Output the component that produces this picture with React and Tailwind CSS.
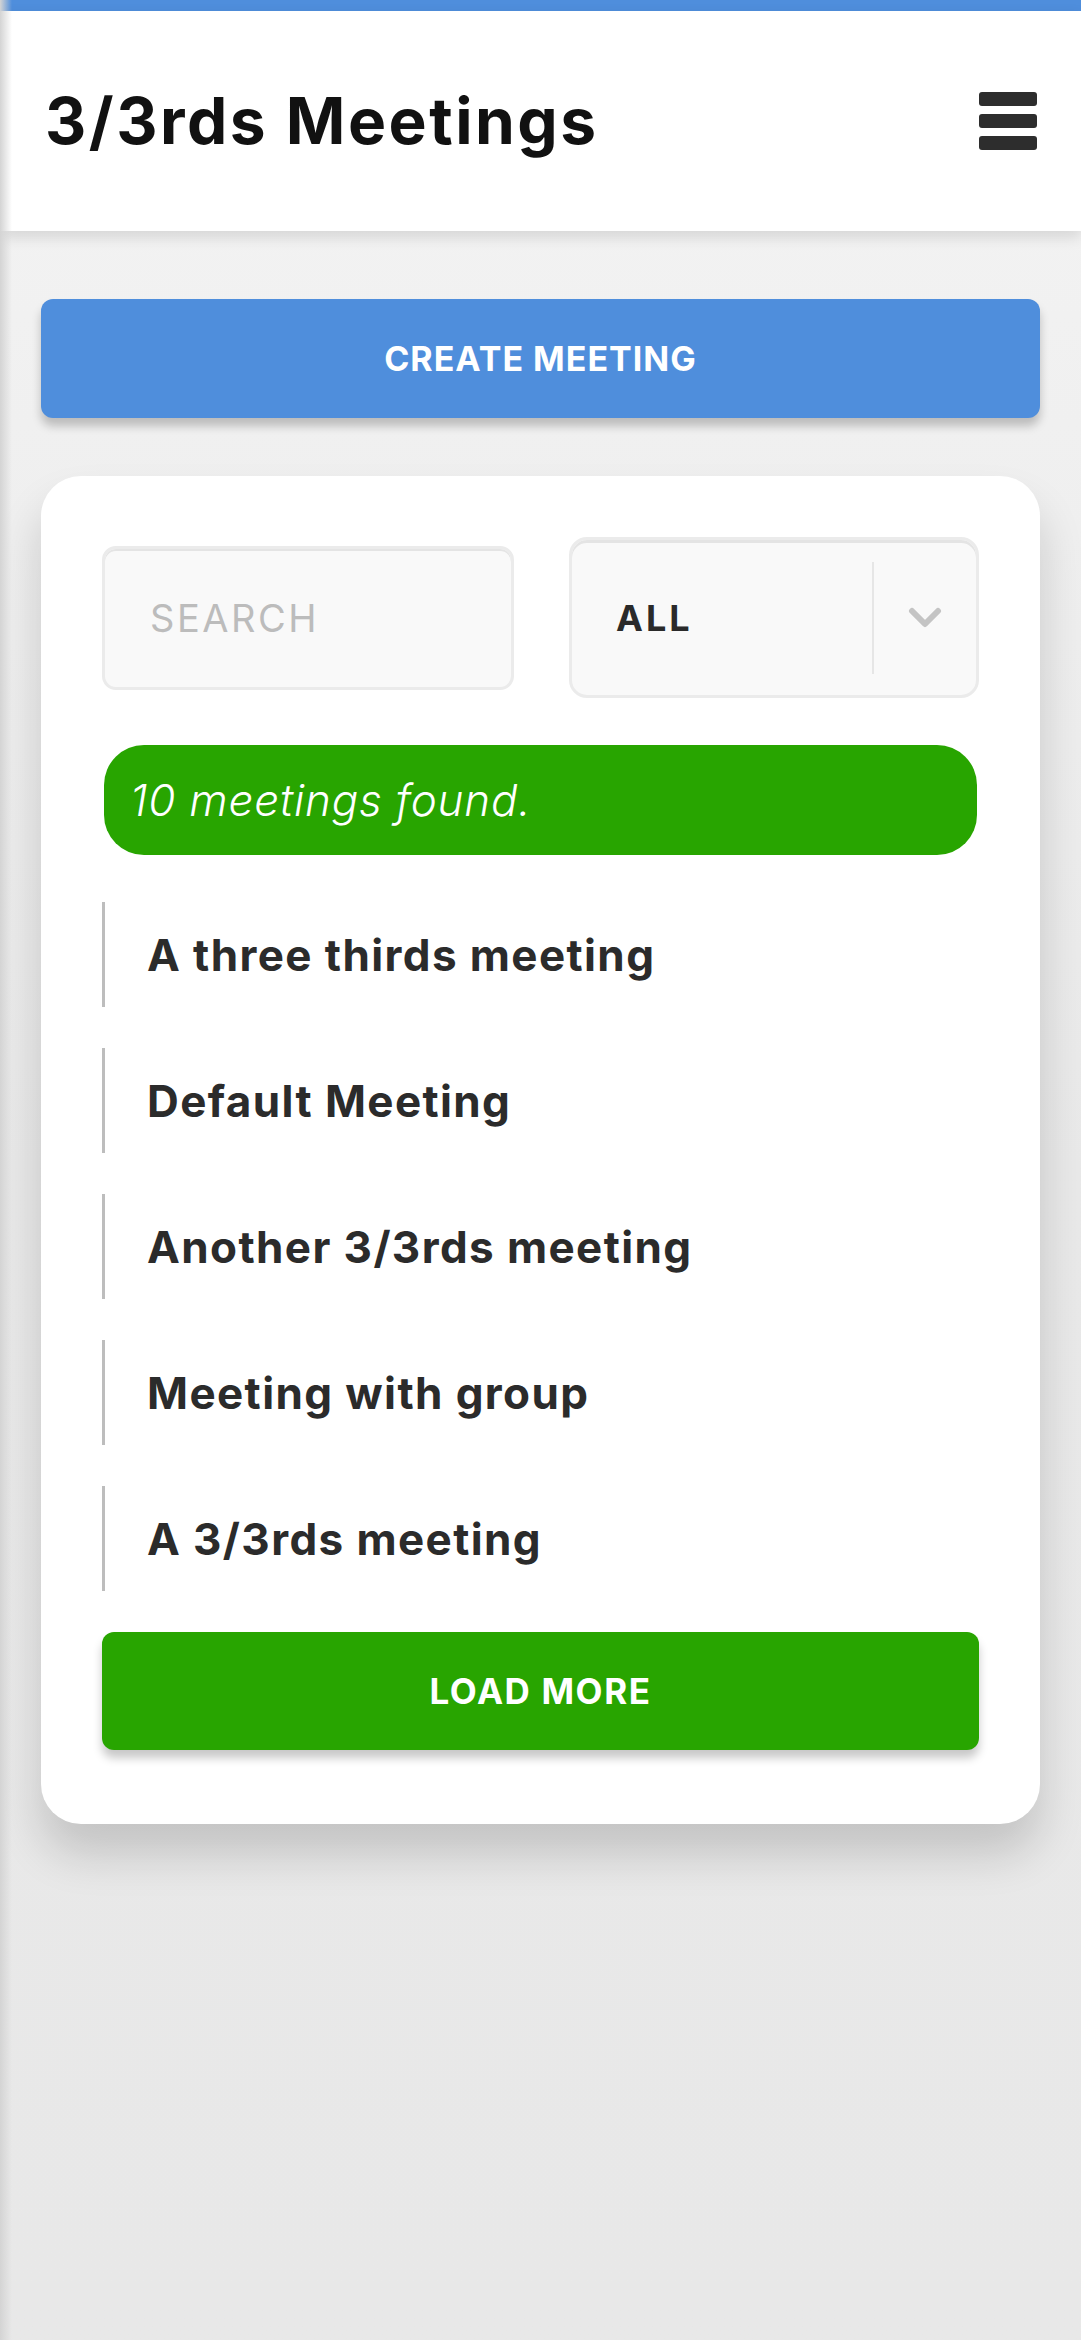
import { useState } from "react";

const meetings = [
  "A three thirds meeting",
  "Default Meeting",
  "Another 3/3rds meeting",
  "Meeting with group",
  "A 3/3rds meeting",
];

function Hamburger() {
  return (
    <button className="flex flex-col gap-[8px] w-[58px]">
      <span className="block h-[14px] rounded-[3px] bg-[#2d2d2d]" />
      <span className="block h-[14px] rounded-[3px] bg-[#2d2d2d]" />
      <span className="block h-[14px] rounded-[3px] bg-[#2d2d2d]" />
    </button>
  );
}

export default function App() {
  const [query, setQuery] = useState("");

  return (
    <div
      className="min-h-[2340px] w-full bg-gradient-to-b from-[#f4f4f4] via-[#e9e9e9] to-[#e8e8e8] relative overflow-hidden"
      style={{ fontFamily: "Inter, 'Open Sans', sans-serif" }}
    >
      {/* left drawer edge */}
      <div className="absolute left-0 top-0 bottom-0 w-[12px] bg-gradient-to-r from-[#d4d4d4] to-transparent pointer-events-none z-20" />

      {/* Top bar */}
      <div className="h-[11px] bg-[#4f8edc]" />

      {/* Header */}
      <header className="relative z-10 h-[220px] bg-white pl-[45px] pr-[44px] flex items-center justify-between shadow-[0_6px_14px_rgba(0,0,0,0.12)]">
        <h1 className="text-[64px] font-bold text-[#111] tracking-[2.5px]">3/3rds Meetings</h1>
        <Hamburger />
      </header>

      <main className="px-[41px] pt-[68px]">
        {/* Create */}
        <button className="w-full h-[119px] rounded-[12px] bg-[#4f8edc] text-white text-[34px] font-bold tracking-[1px] shadow-[0_8px_10px_rgba(0,0,0,0.22)]">
          CREATE MEETING
        </button>

        {/* Card */}
        <div className="mt-[58px] rounded-[40px] bg-white px-[61px] pt-[61px] pb-[74px] shadow-[0_30px_45px_rgba(0,0,0,0.16)]">
          {/* Filters */}
          <div className="flex items-center gap-[55px]">
            <input
              value={query}
              onChange={(e) => setQuery(e.target.value)}
              placeholder="SEARCH"
              className="w-[412px] h-[144px] rounded-[14px] bg-[#f9f9f9] border-[3px] border-[#ebebeb] pl-[45px] text-[38px] tracking-[2.5px] text-[#333] placeholder-[#bcbcbc] outline-none shadow-[inset_0_2px_0_#e4e4e4]"
            />
            <div className="flex-1 h-[161px] rounded-[18px] bg-[#f9f9f9] border-[3px] border-[#ebebeb] flex items-center shadow-[inset_0_3px_0_#e4e4e4]">
              <span className="flex-1 pl-[44px] text-[36px] font-bold tracking-[3px] text-[#2a2a2a]">ALL</span>
              <div className="w-[2px] h-[112px] bg-[#e6e6e6]" />
              <div className="w-[102px] flex items-center justify-center">
                <svg width="34" height="22" viewBox="0 0 34 22" fill="none">
                  <path d="M4 4l13 13L30 4" stroke="#c4c4c4" strokeWidth="6" strokeLinecap="round" strokeLinejoin="round" />
                </svg>
              </div>
            </div>
          </div>

          {/* Count */}
          <div className="mt-[47px] mx-[2px] h-[110px] rounded-[40px] bg-[#28a500] pl-[26px] flex items-center">
            <span className="text-[44px] italic font-light text-white tracking-[0.8px]">10 meetings found.</span>
          </div>

          {/* List */}
          <ul className="mt-[47px] flex flex-col gap-[41px]">
            {meetings.map((m) => (
              <li key={m} className="h-[105px] border-l-[3px] border-[#bdbdbd] pl-[42px] flex items-center">
                <span className="text-[44px] font-bold text-[#2b2b2b] tracking-[1.4px]">{m}</span>
              </li>
            ))}
          </ul>

          {/* Load more */}
          <button className="mt-[41px] w-full h-[118px] rounded-[12px] bg-[#28a500] text-white text-[35px] font-bold tracking-[1.6px] shadow-[0_8px_10px_rgba(0,0,0,0.22)]">
            LOAD MORE
          </button>
        </div>
      </main>
    </div>
  );
}
